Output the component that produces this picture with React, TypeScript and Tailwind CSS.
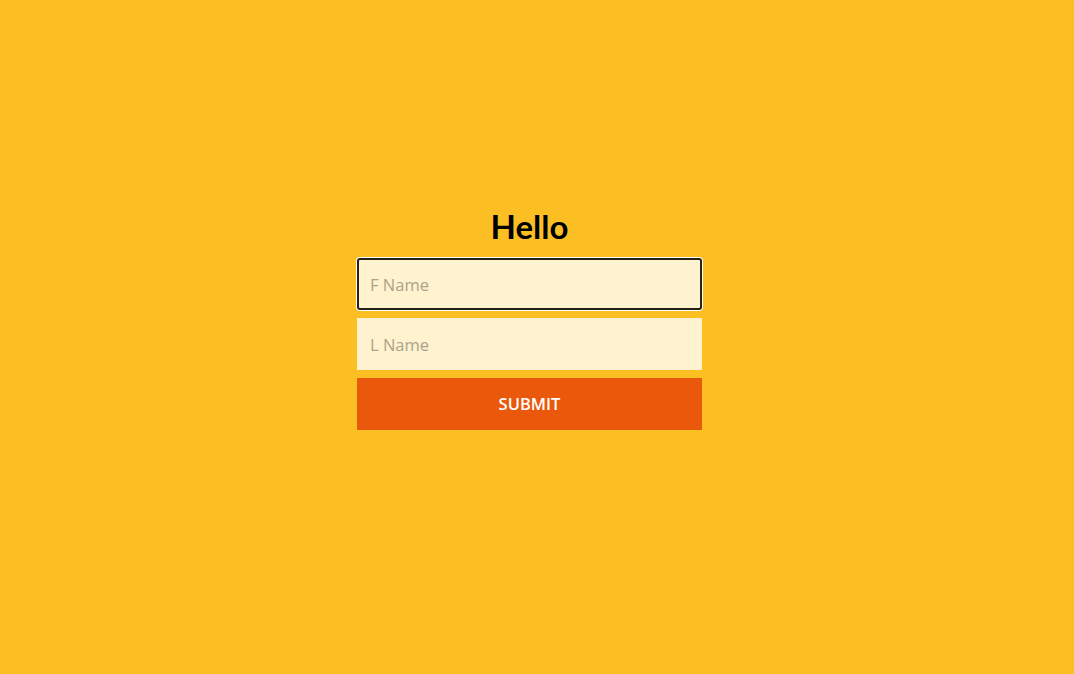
import { useState } from "react";

export default function App() {
  const [first, setFirst] = useState("");
  const [last, setLast] = useState("");

  return (
    <div
      className="min-h-screen w-full bg-[#fbbf24] flex items-center justify-center pr-[15px] pb-[36px]"
      style={{ fontFamily: '"Open Sans", "Noto Sans", sans-serif' }}
    >
      <form
        className="w-[345px] flex flex-col gap-2"
        onSubmit={(e) => e.preventDefault()}
      >
        <h1
          className="text-center text-[33px] leading-[36px] font-bold text-black mb-[6px]"
          style={{ fontFamily: 'Lato, "Open Sans", sans-serif' }}
        >
          Hello
        </h1>
        <input
          autoFocus
          value={first}
          onChange={(e) => setFirst(e.target.value)}
          placeholder="F Name"
          className="h-[52px] w-full bg-[#fef2cf] rounded-[3px] px-[13px] text-[16.5px] text-black placeholder:text-[#aca38a] caret-black outline-none focus:outline-none shadow-[inset_0_0_0_2px_#2a2116,0_0_0_1px_#ffffff]"
        />
        <input
          value={last}
          onChange={(e) => setLast(e.target.value)}
          placeholder="L Name"
          className="h-[52px] w-full bg-[#fef2cf] px-[13px] text-[16.5px] text-black placeholder:text-[#aca38a] outline-none"
        />
        <button
          type="submit"
          className="h-[52px] w-full bg-[#ea580c] text-white text-[16.5px] font-semibold uppercase"
        >
          Submit
        </button>
      </form>
    </div>
  );
}
